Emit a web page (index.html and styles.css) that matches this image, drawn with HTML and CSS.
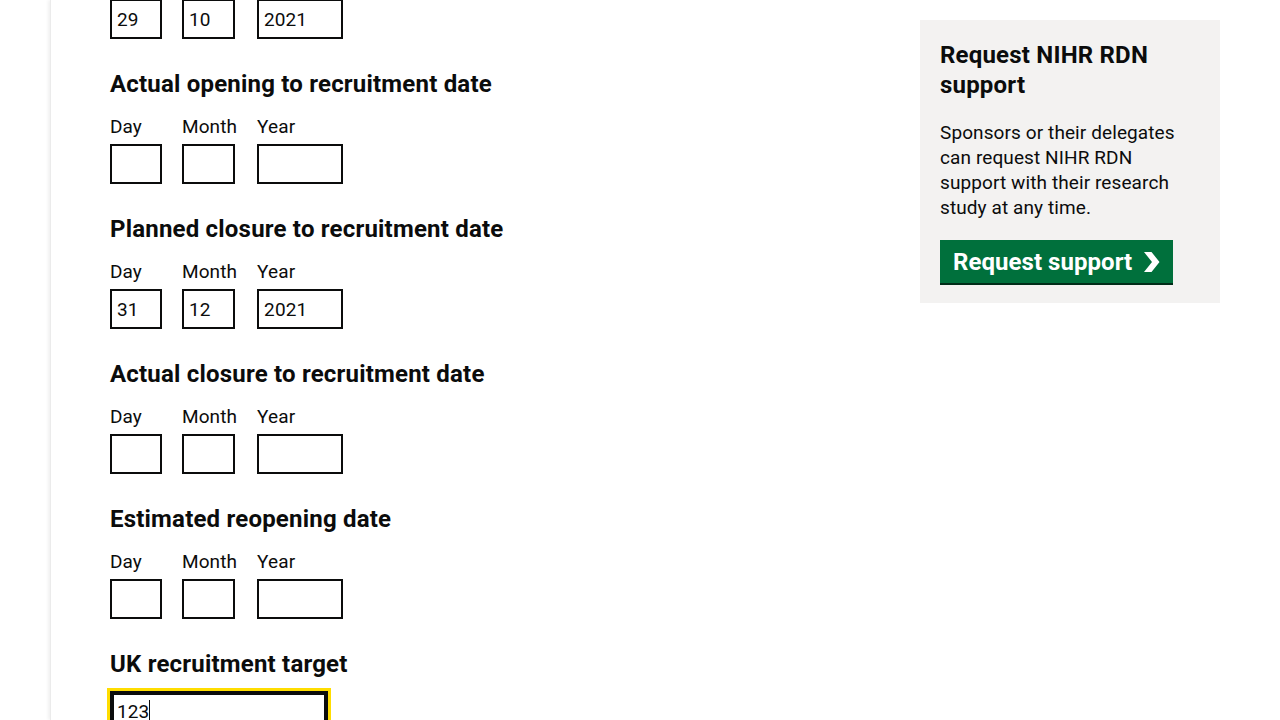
FILE: index.html
```html
<!DOCTYPE html>
<html lang="en">
<head>
<meta charset="utf-8">
<title>Study dates</title>
<link rel="stylesheet" href="styles.css">
</head>
<body>
<div class="page">
  <div class="main">
    <div class="content">
      <div class="form-group form-group--partial">
        <div class="date-input">
          <div class="date-item"><input class="input input--w2" type="text" value="29" aria-label="Day"></div>
          <div class="date-item date-item--month"><input class="input input--w2m" type="text" value="10" aria-label="Month"></div>
          <div class="date-item"><input class="input input--w4" type="text" value="2021" aria-label="Year"></div>
        </div>
      </div>

      <fieldset class="form-group fieldset">
        <legend class="legend">Actual opening to recruitment date</legend>
        <div class="date-input">
          <div class="date-item"><label class="label">Day</label><input class="input input--w2" type="text"></div>
          <div class="date-item date-item--month"><label class="label">Month</label><input class="input input--w2m" type="text"></div>
          <div class="date-item"><label class="label">Year</label><input class="input input--w4" type="text"></div>
        </div>
      </fieldset>

      <fieldset class="form-group fieldset">
        <legend class="legend">Planned closure to recruitment date</legend>
        <div class="date-input">
          <div class="date-item"><label class="label">Day</label><input class="input input--w2" type="text" value="31"></div>
          <div class="date-item date-item--month"><label class="label">Month</label><input class="input input--w2m" type="text" value="12"></div>
          <div class="date-item"><label class="label">Year</label><input class="input input--w4" type="text" value="2021"></div>
        </div>
      </fieldset>

      <fieldset class="form-group fieldset">
        <legend class="legend">Actual closure to recruitment date</legend>
        <div class="date-input">
          <div class="date-item"><label class="label">Day</label><input class="input input--w2" type="text"></div>
          <div class="date-item date-item--month"><label class="label">Month</label><input class="input input--w2m" type="text"></div>
          <div class="date-item"><label class="label">Year</label><input class="input input--w4" type="text"></div>
        </div>
      </fieldset>

      <fieldset class="form-group fieldset">
        <legend class="legend">Estimated reopening date</legend>
        <div class="date-input">
          <div class="date-item"><label class="label">Day</label><input class="input input--w2" type="text"></div>
          <div class="date-item date-item--month"><label class="label">Month</label><input class="input input--w2m" type="text"></div>
          <div class="date-item"><label class="label">Year</label><input class="input input--w4" type="text"></div>
        </div>
      </fieldset>

      <div class="form-group">
        <label class="label-heading" for="target">UK recruitment target</label>
        <div class="input-wrap">
          <input id="target" class="input input--w10 input--focused" type="text" value="123">
          <span class="caret"></span>
        </div>
      </div>
    </div>

    <aside class="sidebar">
      <div class="panel">
        <h2 class="panel-title">Request NIHR RDN support</h2>
        <p class="panel-text">Sponsors or their delegates can request NIHR RDN support with their research study at any time.</p>
        <a class="button" href="#">Request support
          <svg class="button-icon" width="17" height="20" viewBox="0 0 17 20" aria-hidden="true"><path d="M1 0 L8.5 0 L16.5 10 L8.5 20 L1 20 L9 10 Z" fill="#ffffff"/></svg>
        </a>
      </div>
    </aside>
  </div>
</div>
</body>
</html>
```

FILE: styles.css
```css
* { box-sizing: border-box; }

html, body {
  margin: 0;
  padding: 0;
  background: #ffffff;
  height: 720px;
  overflow: hidden;
}

body {
  font-family: Roboto, "Liberation Sans", Arial, sans-serif;
  color: #0b0c0c;
}

.page {
  padding-left: 50px;
  height: 720px;
}

.main {
  display: flex;
  height: 100%;
  border-left: 1px solid #ebebeb;
  box-shadow: -2px 0 3px rgba(0, 0, 0, 0.06);
  padding-left: 59px;
  padding-right: 60px;
}

.content {
  flex: 1;
}

.form-group {
  margin: 0 0 30px 0;
}

.form-group--partial {
  margin-top: -1px;
}

.fieldset {
  border: 0;
  padding: 0;
  min-width: 0;
}

.legend {
  padding: 0;
  font-size: 24px;
  line-height: 30px;
  font-weight: 700;
  letter-spacing: 0.2px;
  margin-bottom: 15px;
}

.date-input {
  display: flex;
  align-items: flex-start;
}

.date-item {
  display: flex;
  flex-direction: column;
  margin-right: 20px;
}

.date-item--month {
  min-width: 55px;
}

.label {
  display: block;
  font-size: 19px;
  line-height: 25px;
  letter-spacing: 0.1px;
  margin-bottom: 5px;
}

.label-heading {
  display: block;
  font-size: 24px;
  line-height: 30px;
  font-weight: 700;
  letter-spacing: 0.2px;
  margin-top: 0;
  margin-bottom: 12px;
}

.input {
  display: block;
  height: 40px;
  margin: 0;
  padding: 5px;
  border: 2px solid #0b0c0c;
  border-radius: 0;
  font-family: Roboto, "Liberation Sans", Arial, sans-serif;
  font-size: 19px;
  line-height: 25px;
  letter-spacing: 0.1px;
  color: #0b0c0c;
  background: #ffffff;
  appearance: none;
  outline: none;
}

.input--w2 { width: 52px; }
.input--w2m { width: 53px; }
.input--w4 { width: 86px; }
.input--w10 { width: 218px; }

.input--focused {
  outline: 3px solid #ffdd00;
  outline-offset: 0;
  box-shadow: inset 0 0 0 2px #0b0c0c;
}

.input-wrap {
  position: relative;
  width: 218px;
}

.caret {
  position: absolute;
  left: 39px;
  top: 9px;
  width: 1px;
  height: 22px;
  background: #0b0c0c;
}

.sidebar {
  width: 300px;
  flex: none;
  padding-top: 20px;
}

.panel {
  background: #f3f2f1;
  padding: 20px;
}

.panel-title {
  margin: 0 0 20px 0;
  font-size: 24px;
  line-height: 30px;
  font-weight: 700;
  letter-spacing: 0.2px;
}

.panel-text {
  margin: 0 0 20px 0;
  font-size: 19px;
  line-height: 25px;
  letter-spacing: 0.1px;
}

.button {
  display: inline-flex;
  align-items: center;
  height: 43px;
  padding: 0 13px 0 13px;
  background: #00703c;
  color: #ffffff;
  text-decoration: none;
  font-size: 24px;
  font-weight: 700;
  line-height: 30px;
  letter-spacing: 0.05px;
  box-shadow: 0 2px 0 #002d18;
}

.button-icon {
  margin-left: 11px;
  display: block;
}
```
